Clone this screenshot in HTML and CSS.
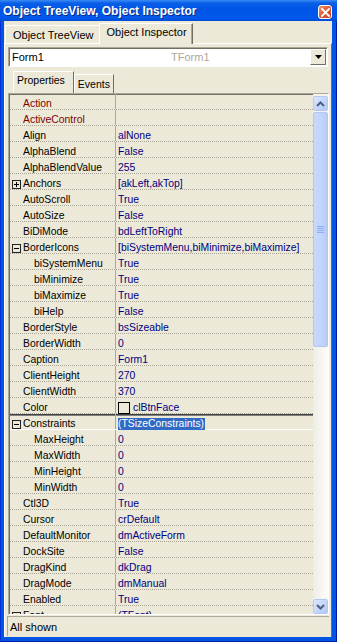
FILE: index.html
```html
<!DOCTYPE html>
<html lang="en">
<head>
    <meta charset="UTF-8">
    <meta name="viewport" content="width=device-width, initial-scale=1.0">
    <title>Object Inspector</title>
    <link rel="stylesheet" href="styles.css">
</head>
<body>
    <div class="window">
        <div class="titlebar">
            <span class="title">Object TreeView, Object Inspector</span>
            <span class="close">
                <svg width="9" height="9" viewBox="0 0 9 9"><path d="M1 1 L8 8 M8 1 L1 8" stroke="#fff" stroke-width="1.8" stroke-linecap="square"/></svg>
            </span>
        </div>
        <div class="client">
            <div class="tabs">
                <div class="tab">Object TreeView</div>
                <div class="tab active">Object Inspector</div>
            </div>
            <div class="sheet">
                <div class="combo">
                    <span class="combo-name">Form1</span>
                    <span class="combo-class">TForm1</span>
                    <span class="combo-btn">
                        <svg width="7" height="4" viewBox="0 0 7 4"><path d="M0 0 H7 L3.5 4 Z" fill="#000"/></svg>
                    </span>
                </div>
                <div class="ptabs">
                    <div class="ptab active">Properties</div>
                    <div class="ptab">Events</div>
                </div>
                <div class="grid">
                    <div class="rows">
                        <div class="row"><div class="name ref">Action</div><div class="value"></div></div>
                        <div class="row"><div class="name ref">ActiveControl</div><div class="value"></div></div>
                        <div class="row"><div class="name">Align</div><div class="value">alNone</div></div>
                        <div class="row"><div class="name">AlphaBlend</div><div class="value">False</div></div>
                        <div class="row"><div class="name">AlphaBlendValue</div><div class="value">255</div></div>
                        <div class="row"><div class="name exp"><svg class="box" width="9" height="9" viewBox="0 0 9 9"><rect x="0.5" y="0.5" width="8" height="8" fill="none" stroke="#222"/><path d="M2 4.5 H7 M4.5 2 V7" stroke="#000"/></svg>Anchors</div><div class="value">[akLeft,akTop]</div></div>
                        <div class="row"><div class="name">AutoScroll</div><div class="value">True</div></div>
                        <div class="row"><div class="name">AutoSize</div><div class="value">False</div></div>
                        <div class="row"><div class="name">BiDiMode</div><div class="value">bdLeftToRight</div></div>
                        <div class="row"><div class="name exp"><svg class="box" width="9" height="9" viewBox="0 0 9 9"><rect x="0.5" y="0.5" width="8" height="8" fill="none" stroke="#222"/><path d="M2 4.5 H7" stroke="#000"/></svg>BorderIcons</div><div class="value">[biSystemMenu,biMinimize,biMaximize]</div></div>
                        <div class="row"><div class="name sub">biSystemMenu</div><div class="value">True</div></div>
                        <div class="row"><div class="name sub">biMinimize</div><div class="value">True</div></div>
                        <div class="row"><div class="name sub">biMaximize</div><div class="value">True</div></div>
                        <div class="row"><div class="name sub">biHelp</div><div class="value">False</div></div>
                        <div class="row"><div class="name">BorderStyle</div><div class="value">bsSizeable</div></div>
                        <div class="row"><div class="name">BorderWidth</div><div class="value">0</div></div>
                        <div class="row"><div class="name">Caption</div><div class="value">Form1</div></div>
                        <div class="row"><div class="name">ClientHeight</div><div class="value">270</div></div>
                        <div class="row"><div class="name">ClientWidth</div><div class="value">370</div></div>
                        <div class="row"><div class="name">Color</div><div class="value"><span class="swatch"></span>clBtnFace</div></div>
                        <div class="row sel"><div class="name exp"><svg class="box" width="9" height="9" viewBox="0 0 9 9"><rect x="0.5" y="0.5" width="8" height="8" fill="none" stroke="#222"/><path d="M2 4.5 H7" stroke="#000"/></svg>Constraints</div><div class="value"><span class="hilite">(TSizeConstraints)</span></div></div>
                        <div class="row"><div class="name sub">MaxHeight</div><div class="value">0</div></div>
                        <div class="row"><div class="name sub">MaxWidth</div><div class="value">0</div></div>
                        <div class="row"><div class="name sub">MinHeight</div><div class="value">0</div></div>
                        <div class="row"><div class="name sub">MinWidth</div><div class="value">0</div></div>
                        <div class="row"><div class="name">Ctl3D</div><div class="value">True</div></div>
                        <div class="row"><div class="name">Cursor</div><div class="value">crDefault</div></div>
                        <div class="row"><div class="name">DefaultMonitor</div><div class="value">dmActiveForm</div></div>
                        <div class="row"><div class="name">DockSite</div><div class="value">False</div></div>
                        <div class="row"><div class="name">DragKind</div><div class="value">dkDrag</div></div>
                        <div class="row"><div class="name">DragMode</div><div class="value">dmManual</div></div>
                        <div class="row"><div class="name">Enabled</div><div class="value">True</div></div>
                        <div class="row"><div class="name exp"><svg class="box" width="9" height="9" viewBox="0 0 9 9"><rect x="0.5" y="0.5" width="8" height="8" fill="none" stroke="#222"/><path d="M2 4.5 H7 M4.5 2 V7" stroke="#000"/></svg>Font</div><div class="value">(TFont)</div></div>
                    </div>
                    <div class="vscroll">
                        <div class="sb-btn">
                            <svg width="9" height="6" viewBox="0 0 9 6"><path d="M1 5 L4.5 1.5 L8 5" fill="none" stroke="#4D6185" stroke-width="2"/></svg>
                        </div>
                        <div class="sb-thumb">
                            <svg width="7" height="8" viewBox="0 0 7 8"><path d="M0 0.5 H7 M0 2.5 H7 M0 4.5 H7 M0 6.5 H7" stroke="#8CB0F8"/></svg>
                        </div>
                        <div class="sb-track"></div>
                        <div class="sb-btn">
                            <svg width="9" height="6" viewBox="0 0 9 6"><path d="M1 1 L4.5 4.5 L8 1" fill="none" stroke="#4D6185" stroke-width="2"/></svg>
                        </div>
                    </div>
                </div>
                <div class="status">All shown</div>
            </div>
        </div>
    </div>
</body>
</html>
```

FILE: styles.css
```css
body {
    margin: 0;
    font-family: "Liberation Sans", Arial, sans-serif;
    font-size: 11px;
    color: #000;
}

.window {
    width: 337px;
    height: 642px;
    display: flex;
    flex-direction: column;
    overflow: hidden;
    background: #0055E5;
    box-shadow: inset 1px 0 #0831D9, inset -1px 0 #001EA0, inset 0 -1px #001EA0;
}

.titlebar {
    height: 21px;
    flex: none;
    display: flex;
    align-items: center;
    justify-content: space-between;
    padding: 0 5px 0 3px;
    background: linear-gradient(#3C8CF6 0, #0A5FE8 3px, #0055E5 40%, #0059EC 85%, #004BD4 100%);
    color: #fff;
    font-weight: bold;
    font-size: 12px;
}

.title {
    text-shadow: 1px 1px #0A2A8A;
}

.close {
    width: 14px;
    height: 14px;
    box-sizing: border-box;
    border: 1px solid #fff;
    border-radius: 3px;
    background: linear-gradient(135deg, #F09878 0%, #E0603A 45%, #C8401C 100%);
    display: flex;
    align-items: center;
    justify-content: center;
    margin-top: 3px;
}

.client {
    flex: 1;
    min-height: 0;
    display: flex;
    flex-direction: column;
    margin: 0 5px 5px 4px;
    background: #ECE9D8;
}

.tabs {
    height: 22px;
    flex: none;
    display: flex;
    align-items: flex-end;
    padding-left: 1px;
}

.tab {
    height: 18px;
    line-height: 19px;
    padding: 0 5px 0 7px;
    box-sizing: border-box;
    border-top: 1px solid #fff;
    border-left: 1px solid #fff;
}

.tab.active {
    height: 21px;
    line-height: 17px;
    margin-bottom: -1px;
    background: #ECE9D8;
    border-right: 1px solid #716F64;
    box-shadow: inset -1px 0 #ACA899;
    position: relative;
}

.sheet {
    flex: 1;
    min-height: 0;
    display: flex;
    flex-direction: column;
    padding: 3px 2px 1px 3px;
    border-top: 1px solid #fff;
    border-left: 1px solid #fff;
    border-right: 1px solid #716F64;
}

.combo {
    height: 20px;
    flex: none;
    margin-right: 1px;
    display: flex;
    align-items: center;
    box-sizing: border-box;
    background: #fff;
    border: 1px solid;
    border-color: #ACA899 #fff #fff #ACA899;
    box-shadow: inset 1px 1px #716F64;
}

.combo-name {
    width: 159px;
    padding-left: 3px;
    flex: none;
}

.combo-class {
    flex: 1;
    color: #ACA899;
}

.combo-btn {
    width: 16px;
    height: 16px;
    margin-right: 1px;
    box-sizing: border-box;
    display: flex;
    align-items: center;
    justify-content: center;
    background: #ECE9D8;
    border: 1px solid;
    border-color: #fff #716F64 #716F64 #fff;
}

.ptabs {
    height: 23px;
    flex: none;
    display: flex;
    align-items: flex-end;
    padding-left: 5px;
    margin-top: 3px;
    font-size: 10.5px;
}

.ptab {
    height: 19px;
    line-height: 19px;
    padding: 0 3px;
    box-sizing: border-box;
    border-top: 1px solid #fff;
    border-left: 1px solid #fff;
    border-right: 1px solid #716F64;
}

.ptab.active {
    height: 22px;
    line-height: 17px;
    padding: 0 8px 0 3px;
}

.grid {
    flex: 1;
    min-height: 0;
    display: flex;
    overflow: hidden;
    border: 1px solid;
    border-color: #ACA899 #fff #fff #ACA899;
    box-shadow: inset 1px 1px #716F64;
    padding-left: 1px;
    font-size: 10.4px;
}

.rows {
    flex: 1;
    overflow: hidden;
}

.row {
    display: flex;
    height: 16px;
    box-sizing: border-box;
    border-bottom: 1px dotted #A8A597;
    line-height: 16px;
}

.name {
    width: 106px;
    flex: none;
    box-sizing: border-box;
    padding: 2px 0 0 13px;
    border-right: 1px solid #ACA899;
    white-space: nowrap;
    display: flex;
    align-items: flex-start;
}

.name.ref {
    color: #800000;
}

.name.sub {
    padding-left: 24px;
}

.name.exp {
    padding-left: 2px;
}

.box {
    margin: 4px 2px 0 0;
    flex: none;
}

.value {
    flex: 1;
    padding: 2px 0 0 2px;
    color: #000080;
    white-space: nowrap;
    display: flex;
    align-items: flex-start;
}

.swatch {
    width: 12px;
    height: 12px;
    box-sizing: border-box;
    border: 1px solid #000;
    background: #ECE9D8;
    margin: 2px 3px 0 0;
}

.row.sel {
    border-bottom: 1px solid #fff;
    box-shadow: inset 0 1px #404040, inset 0 2px #808080;
}

.hilite {
    background: #316AC5;
    color: #fff;
    line-height: 12px;
    padding-right: 1px;
    margin-top: 2px;
}

.vscroll {
    width: 15px;
    flex: none;
    display: flex;
    flex-direction: column;
    gap: 1px;
    background: #F4F3EE;
    padding-top: 2px;
}

.sb-btn {
    height: 15px;
    flex: none;
    box-sizing: border-box;
    border: 1px solid #B4C8F6;
    border-radius: 2px;
    background: linear-gradient(135deg, #DDE8FE 0%, #C2D4FB 60%, #B3C7F5 100%);
    display: flex;
    align-items: center;
    justify-content: center;
}

.sb-thumb {
    height: 235px;
    flex: none;
    box-sizing: border-box;
    border: 1px solid #B1C6F2;
    border-radius: 2px;
    background: linear-gradient(90deg, #C9D9FC 0%, #C2D4FB 60%, #B7CBF6 100%);
    display: flex;
    align-items: center;
    justify-content: center;
}

.sb-track {
    flex: 1;
    background: linear-gradient(90deg, #EEEDE5, #FDFDFA);
}

.status {
    height: 20px;
    flex: none;
    margin-top: 1px;
    margin-left: -1px;
    padding-left: 2px;
    line-height: 20px;
    box-sizing: border-box;
    border-top: 1px solid #ACA899;
    border-left: 1px solid #ACA899;
}
```
